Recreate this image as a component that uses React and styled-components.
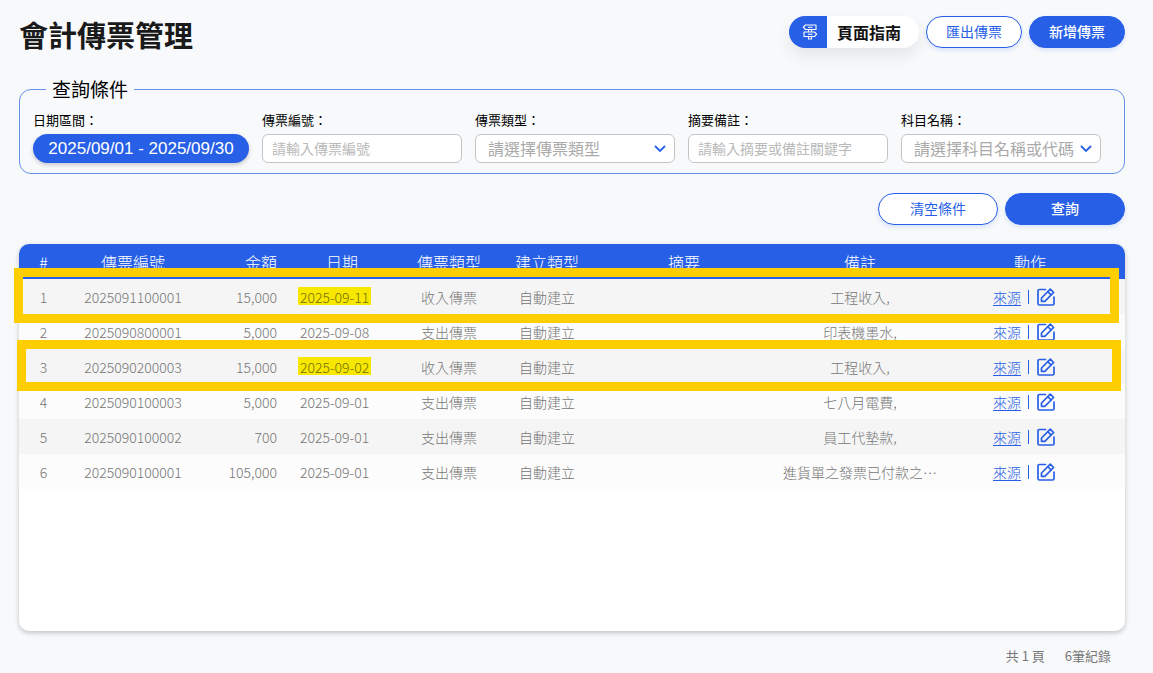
import styled, { createGlobalStyle } from "styled-components";

const GlobalStyle = createGlobalStyle`
  * {
    box-sizing: border-box;
  }

  body {
    margin: 0;
    background: #f7f9fb;
    font-family: "Noto Sans CJK TC", sans-serif;
    font-size: 14px;
  }

  button, input, select {
    font-family: inherit;
  }
`;

const Page = styled.main`
  padding: 16px 28px 8px 19px;
`;

const Header = styled.header`
  display: flex;
  justify-content: space-between;
  align-items: flex-start;
  height: 60px;
`;

const Title = styled.h1`
  margin: 0;
  color: #1a1a1a;
  font-size: 29px;
  font-weight: 700;
  line-height: 36px;
`;

const Actions = styled.div`
  display: flex;
  justify-content: flex-end;
  gap: 7px;
`;

const Button = styled.button`
  width: ${(props) => (props.$wide ? "120px" : "96px")};
  height: 32px;
  padding: 0 0 2px;
  border: 1px solid #275fe6;
  border-radius: 16px;
  background: ${(props) => (props.$primary ? "#275fe6" : "white")};
  color: ${(props) => (props.$primary ? "white" : "#275fe6")};
  font-size: 14px;
  font-weight: ${(props) => (props.$primary ? 500 : 400)};
  box-shadow: 0 2px 4px rgba(39, 95, 230, 0.15);
`;

const GuideButton = styled.button`
  display: flex;
  align-items: center;
  width: 130px;
  height: 32px;
  padding: 0;
  border: none;
  border-radius: 16px;
  overflow: hidden;
  background: white;
  color: #111;
  font-size: 16px;
  font-weight: 700;
  box-shadow: 0 8px 16px rgba(0, 0, 0, 0.08);
`;

const GuideIcon = styled.span`
  display: flex;
  align-items: center;
  justify-content: center;
  width: 38px;
  height: 32px;
  margin-right: 10px;
  padding-left: 4px;
  background: #275fe6;
  color: white;
`;

const Filters = styled.fieldset`
  display: flex;
  flex-wrap: wrap;
  gap: 13px;
  min-width: 0;
  margin: 0 0 19px;
  padding: 7px 13px 10px;
  border: 1px solid #668fec;
  border-radius: 12px;
`;

const Legend = styled.legend`
  margin-left: 13px;
  padding: 0 6px;
  color: black;
  font-size: 19px;
  line-height: 26px;
`;

const Field = styled.div`
  display: flex;
  flex-direction: column;
  gap: 4px;
  width: ${(props) => (props.$wide ? "216px" : "200px")};
`;

const Label = styled.label`
  color: black;
  font-size: 13px;
  line-height: 21px;
`;

const DateButton = styled.button`
  height: 29px;
  padding: 0;
  border: none;
  border-radius: 15px;
  background: #275fe6;
  color: white;
  font-family: "Liberation Sans", Arial, sans-serif;
  font-size: 17px;
  box-shadow: 0 2px 4px rgba(0, 0, 0, 0.2);
`;

const TextInput = styled.input`
  width: 100%;
  height: 29px;
  padding: 0 9px 2px;
  border: 1px solid #c4c4c4;
  border-radius: 6px;
  background: white;
  font-size: 14px;

  &::placeholder {
    color: #b9b9b9;
  }
`;

const SelectWrapper = styled.div`
  display: grid;
  align-items: center;

  select, svg {
    grid-area: 1 / 1;
  }

  svg {
    justify-self: end;
    margin-right: 9px;
    pointer-events: none;
  }
`;

const Select = styled.select`
  width: 100%;
  height: 29px;
  padding: 0 22px 2px 12px;
  border: 1px solid #c4c4c4;
  border-radius: 6px;
  appearance: none;
  background: white;
  color: #aaa;
  font-size: 16px;
`;

const TableArea = styled.section`
  position: relative;
  margin-top: 19px;
`;

const TableCard = styled.div`
  min-height: 387px;
  border-radius: 10px;
  overflow: hidden;
  background: white;
  box-shadow: 0 2px 5px rgba(0, 0, 0, 0.22);
`;

const Table = styled.table`
  width: 100%;
  border-collapse: collapse;
  table-layout: fixed;
`;

const Th = styled.th`
  height: 35px;
  padding: ${(props) => props.$padding || "0"};
  background: #275fe6;
  color: white;
  font-size: 16px;
  font-weight: 300;
  line-height: 24px;
  text-align: ${(props) => props.$align || "center"};
`;

const Row = styled.tr`
  height: 35px;
  background: #fcfcfc;

  &:nth-child(odd) {
    background: #f5f5f5;
  }
`;

const Td = styled.td`
  padding: ${(props) => props.$padding || "0"};
  overflow: hidden;
  color: #757575;
  font-weight: 300;
  line-height: 20px;
  text-align: ${(props) => props.$align || "center"};
  text-overflow: ellipsis;
  white-space: nowrap;
`;

const Highlight = styled.mark`
  display: inline-block;
  margin: 0 -2px;
  padding: 2px 2px 0;
  background: #f8e800;
  color: #757000;
  line-height: 16px;
`;

const RowActions = styled.div`
  display: flex;
  align-items: center;
  color: #275fe6;
`;

const SourceLink = styled.a`
  color: #275fe6;
  text-underline-offset: 2px;
`;

const Divider = styled.span`
  width: 1px;
  height: 14px;
  margin: 0 8px 0 7px;
  background: #275fe6;
`;

const EditButton = styled.button`
  display: flex;
  padding: 0;
  border: none;
  background: none;
  color: #275fe6;
`;

// yellow marker frames drawn over the table rows
const Frame = styled.div`
  position: absolute;
  top: ${(props) => props.$top};
  left: ${(props) => props.$left};
  right: ${(props) => props.$right};
  height: ${(props) => props.$height};
  border: 9px solid #ffce00;
  pointer-events: none;
`;

const Footer = styled.footer`
  display: flex;
  justify-content: flex-end;
  gap: 20px;
  padding: 15px 14px 0 0;
  color: #777;
  font-size: 13px;
  line-height: 20px;
`;

const columns = [
  { name: "#", width: "49px" },
  { name: "傳票編號", width: "130px" },
  { name: "金額", width: "87px", align: "right", padding: "0 8px 0 0" },
  { name: "日期", width: "114px" },
  { name: "傳票類型", width: "100px" },
  { name: "建立類型", width: "96px" },
  { name: "摘要" },
  { name: "備註", width: "174px" },
  { name: "動作", width: "178px", padding: "0 12px 0 0" },
];

const vouchers = [
  { id: "2025091100001", amount: "15,000", date: "2025-09-11", type: "收入傳票", note: "工程收入,", marked: true },
  { id: "2025090800001", amount: "5,000", date: "2025-09-08", type: "支出傳票", note: "印表機墨水," },
  { id: "2025090200003", amount: "15,000", date: "2025-09-02", type: "收入傳票", note: "工程收入,", marked: true },
  { id: "2025090100003", amount: "5,000", date: "2025-09-01", type: "支出傳票", note: "七八月電費," },
  { id: "2025090100002", amount: "700", date: "2025-09-01", type: "支出傳票", note: "員工代墊款," },
  { id: "2025090100001", amount: "105,000", date: "2025-09-01", type: "支出傳票", note: "進貨單之發票已付款之…" },
];

function SignIcon() {
  return (
    <svg width="16" height="16" viewBox="0 0 16 16" fill="none" stroke="currentColor" strokeWidth="1.1" strokeLinejoin="round">
      <path d="M3.500 1H14v4.500H3.500L1.300 3.200z" />
      <path d="M2 8h10.500l2.200 2.200-2.200 2.300H2z" />
      <path d="M6.500 5.500V8M9.500 5.500V8M6.500 12.500V15h3v-2.500" />
      <path d="M6 3.200h4.500M6 10.200h4.500" />
    </svg>
  );
}

function ChevronIcon() {
  return (
    <svg width="12" height="8" viewBox="0 0 12 8" fill="none" stroke="#275fe6" strokeWidth="1.8">
      <path d="M1 1l5 5 5-5" />
    </svg>
  );
}

function EditIcon() {
  return (
    <svg width="18" height="18" viewBox="0 0 18 18" fill="none" stroke="currentColor" strokeWidth="1.7" strokeLinecap="round" strokeLinejoin="round">
      <path d="M8.500 1.500H2.500a1.500 1.500 0 0 0-1.500 1.500v12.500a1.500 1.500 0 0 0 1.500 1.500h13a1.500 1.500 0 0 0 1.500-1.500V9" />
      <path d="M4.500 13.300v-3.300L13.300 1.200l3.300 3.300-8.800 8.800z" />
      <path d="M10.800 3.700l3.300 3.300" />
    </svg>
  );
}

function SelectField({ id, label, placeholder }) {
  return (
    <Field>
      <Label htmlFor={id}>{label}</Label>
      <SelectWrapper>
        <Select id={id} defaultValue="">
          <option value="">{placeholder}</option>
        </Select>
        <ChevronIcon />
      </SelectWrapper>
    </Field>
  );
}

function TextField({ id, label, placeholder }) {
  return (
    <Field>
      <Label htmlFor={id}>{label}</Label>
      <TextInput id={id} type="text" placeholder={placeholder} />
    </Field>
  );
}

export default function App() {
  return (
    <>
      <GlobalStyle />
      <Page>
        <Header>
          <Title>會計傳票管理</Title>
          <Actions>
            <GuideButton type="button">
              <GuideIcon>
                <SignIcon />
              </GuideIcon>
              頁面指南
            </GuideButton>
            <Button type="button">匯出傳票</Button>
            <Button type="button" $primary>新增傳票</Button>
          </Actions>
        </Header>

        <Filters>
          <Legend>查詢條件</Legend>
          <Field $wide>
            <Label htmlFor="range">日期區間：</Label>
            <DateButton id="range" type="button">2025/09/01 - 2025/09/30</DateButton>
          </Field>
          <TextField id="number" label="傳票編號：" placeholder="請輸入傳票編號" />
          <SelectField id="type" label="傳票類型：" placeholder="請選擇傳票類型" />
          <TextField id="note" label="摘要備註：" placeholder="請輸入摘要或備註關鍵字" />
          <SelectField id="subject" label="科目名稱：" placeholder="請選擇科目名稱或代碼" />
        </Filters>

        <Actions>
          <Button type="button" $wide>清空條件</Button>
          <Button type="button" $wide $primary>查詢</Button>
        </Actions>

        <TableArea>
          <TableCard>
            <Table>
              <colgroup>
                {columns.map((column) => (
                  <col key={column.name} style={{ width: column.width }} />
                ))}
              </colgroup>
              <thead>
                <tr>
                  {columns.map((column) => (
                    <Th key={column.name} $align={column.align} $padding={column.padding}>
                      {column.name}
                    </Th>
                  ))}
                </tr>
              </thead>
              <tbody>
                {vouchers.map((voucher, index) => (
                  <Row key={voucher.id}>
                    <Td>{index + 1}</Td>
                    <Td>{voucher.id}</Td>
                    <Td $align="right" $padding="0 8px 0 0">{voucher.amount}</Td>
                    <Td $align="left" $padding="0 0 0 15px">
                      {voucher.marked ? <Highlight>{voucher.date}</Highlight> : voucher.date}
                    </Td>
                    <Td>{voucher.type}</Td>
                    <Td>自動建立</Td>
                    <Td></Td>
                    <Td>{voucher.note}</Td>
                    <Td $padding="0 0 0 46px">
                      <RowActions>
                        <SourceLink href="#">來源</SourceLink>
                        <Divider />
                        <EditButton type="button" aria-label="編輯">
                          <EditIcon />
                        </EditButton>
                      </RowActions>
                    </Td>
                  </Row>
                ))}
              </tbody>
            </Table>
          </TableCard>
          <Frame $top="24px" $left="-5px" $right="6px" $height="55px" />
          <Frame $top="96px" $left="-2px" $right="4px" $height="51px" />
        </TableArea>

        <Footer>
          <span>共 1 頁</span>
          <span>6筆紀錄</span>
        </Footer>
      </Page>
    </>
  );
}
